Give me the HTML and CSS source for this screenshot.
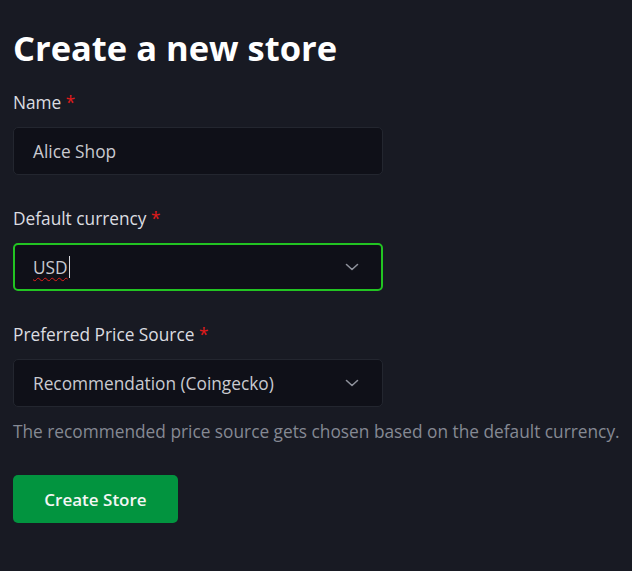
FILE: index.html
```html
<!DOCTYPE html>
<html lang="en">
<head>
<meta charset="utf-8">
<title>Create a new store</title>
<link rel="stylesheet" href="styles.css">
</head>
<body>
<main class="page">
  <h1 class="title">Create a new store</h1>
  <form class="form">
    <div class="group">
      <label class="label">Name <span class="req">*</span></label>
      <div class="field"><span class="value">Alice Shop</span></div>
    </div>
    <div class="group">
      <label class="label">Default currency <span class="req">*</span></label>
      <div class="field field-focus">
        <span class="value"><span class="spell">USD</span><span class="caret"></span></span>
        <svg class="chev" width="14" height="8" viewBox="0 0 14 8"><path d="M1.5 1.5 L7 6.5 L12.5 1.5" fill="none" stroke="#8e919b" stroke-width="1.6" stroke-linecap="round" stroke-linejoin="round"/></svg>
      </div>
    </div>
    <div class="group group-last">
      <label class="label">Preferred Price Source <span class="req">*</span></label>
      <div class="field">
        <span class="value">Recommendation (Coingecko)</span>
        <svg class="chev" width="14" height="8" viewBox="0 0 14 8"><path d="M1.5 1.5 L7 6.5 L12.5 1.5" fill="none" stroke="#8e919b" stroke-width="1.6" stroke-linecap="round" stroke-linejoin="round"/></svg>
      </div>
      <p class="help">The recommended price source gets chosen based on the default currency.</p>
    </div>
    <button type="button" class="btn">Create Store</button>
  </form>
</main>
</body>
</html>
```

FILE: styles.css
```css
html, body {
  margin: 0;
  padding: 0;
  background: #181a23;
}
body {
  font-family: "Open Sans", "Liberation Sans", sans-serif;
  color: #dfe0e3;
  width: 632px;
  height: 571px;
  overflow: hidden;
}
.page {
  padding: 26px 0 0 13px;
}
.title {
  margin: 0 0 21px;
  font-size: 34.5px;
  line-height: 43px;
  font-weight: 700;
  color: #ffffff;
}
.form {
  display: flex;
  flex-direction: column;
}
.group {
  display: flex;
  flex-direction: column;
  margin-bottom: 31px;
}
.group-last {
  margin-bottom: 31px;
}
.label {
  font-size: 17.3px;
  line-height: 24px;
  padding-top: 1px;
  margin-bottom: 12px;
  color: #dcdde1;
}
.req {
  color: #e01b1b;
}
.field {
  box-sizing: border-box;
  width: 370px;
  height: 48px;
  background: #0f1018;
  border: 1px solid #23262f;
  border-radius: 5px;
  display: flex;
  align-items: center;
  justify-content: space-between;
  padding: 0 23px 0 19px;
  font-size: 17.3px;
  color: #c9cad0;
}
.field-focus {
  border: 2px solid #22c422;
  padding: 0 22px 0 18px;
}
.value {
  display: flex;
  align-items: center;
}
.spell {
  text-decoration: underline wavy #e0201c;
  text-decoration-thickness: 1px;
  text-underline-offset: 3px;
}
.caret {
  display: inline-block;
  width: 1px;
  height: 22px;
  background: #d8d8dc;
  margin-left: 1px;
}
.chev {
  display: block;
}
.help {
  margin: 13px 0 0;
  font-size: 17.3px;
  line-height: 24px;
  color: #858993;
  white-space: nowrap;
}
.btn {
  align-self: flex-start;
  box-sizing: border-box;
  width: 165px;
  height: 48px;
  padding: 0;
  background: #02943f;
  border: 0;
  border-radius: 5px;
  color: #f4f6f5;
  font-family: "Open Sans", "Liberation Sans", sans-serif;
  font-size: 17px;
  font-weight: 600;
}
```
